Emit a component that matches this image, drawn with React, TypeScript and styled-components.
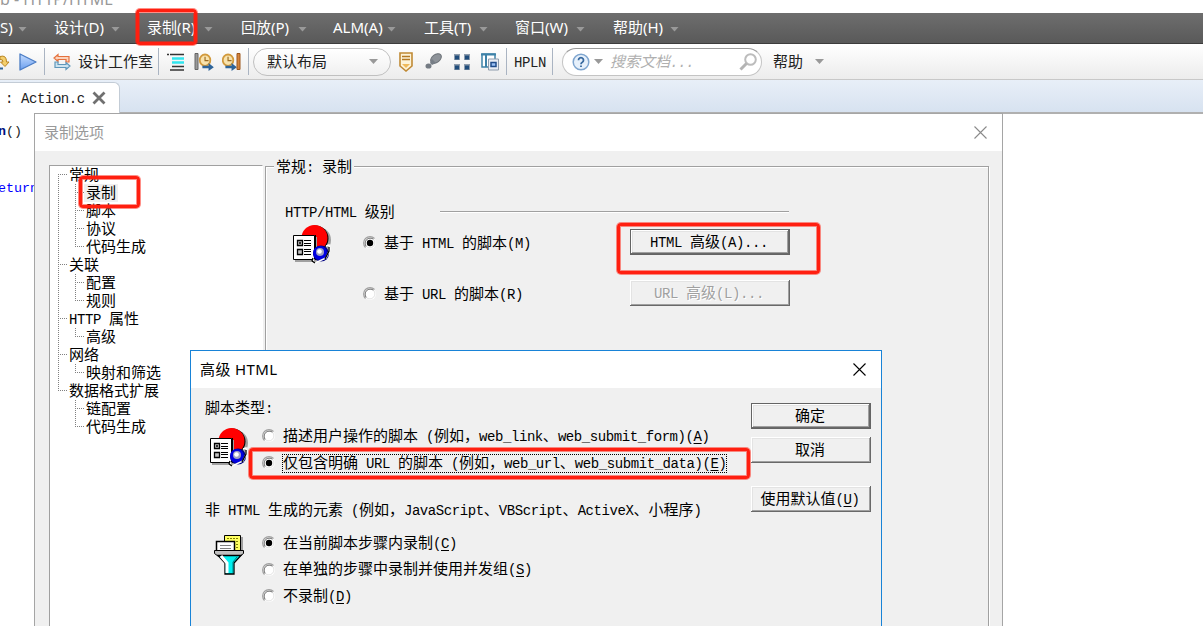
import React from 'react'
import styled, { createGlobalStyle, css } from 'styled-components';

const TREE = [
  { label: '常规', children: ['录制', '脚本', '协议', '代码生成'] },
  { label: '关联', children: ['配置', '规则'] },
  { label: 'HTTP 属性', children: ['高级'] },
  { label: '网络', children: ['映射和筛选'] },
  { label: '数据格式扩展', children: ['链配置', '代码生成'] },
];

const MENUS = [
  { label: 'S)', width: 27, gap: 27 },
  { label: '设计(D)', width: 66, gap: 27 },
  { label: '录制(R)', width: 66, gap: 28 },
  { label: '回放(P)', width: 66, gap: 26 },
  { label: 'ALM(A)', width: 63, gap: 28 },
  { label: '工具(T)', width: 64, gap: 27 },
  { label: '窗口(W)', width: 70, gap: 28 },
  { label: '帮助(H)', width: 66, gap: 0 },
];

// Half-width runs get the fixed 8px font, an "&" marks the accelerator key
function Label({ children }: { children: string }) {
  const runs = children.match(/[\x20-\x7e]+|[^\x20-\x7e]+/g) || [];
  return (
    <Text>
      {runs.map((run, i) => {
        if (!/^[\x20-\x7e]/.test(run)) return run;
        const at = run.indexOf('&');
        return (
          <Latin key={i}>
            {at < 0 ? run : <>{run.slice(0, at)}<u>{run[at + 1]}</u>{run.slice(at + 2)}</>}
          </Latin>
        );
      })}
    </Text>
  );
}

function Radio({ label, checked, focused }: { label: string; checked?: boolean; focused?: boolean }) {
  return (
    <RadioRow>
      <svg width="14" height="14" viewBox="0 0 14 14">
        <circle cx="7" cy="7" r="6" fill="#fff" />
        <path d="M2.5 11.5A6.2 6.2 0 0 1 11.5 2.5" fill="none" stroke="#a0a0a0" strokeWidth="1.2" />
        <path d="M3.4 10.6A5.1 5.1 0 0 1 10.6 3.4" fill="none" stroke="#696969" strokeWidth="1" />
        <path d="M3.4 10.6A5.1 5.1 0 0 0 10.6 3.4" fill="none" stroke="#e3e3e3" strokeWidth="1" />
        {checked && <circle cx="7" cy="7" r="3.2" fill="#000" />}
      </svg>
      <RadioLabel $focused={focused}><Label>{label}</Label></RadioLabel>
    </RadioRow>
  );
}

function CloseIcon({ color }: { color: string }) {
  return (
    <svg width="13" height="13" viewBox="0 0 13 13">
      <path d="M.5.5l12 12M12.5.5l-12 12" stroke={color} strokeWidth="1.1" fill="none" />
    </svg>
  );
}

function RecordIcon() {
  return (
    <svg width="39" height="39" viewBox="0 0 39 39">
      <circle cx="25" cy="15" r="13" fill="#a0a0a0" />
      <circle cx="22.500" cy="13.500" r="13" fill="#000" />
      <circle cx="21.500" cy="13" r="13" fill="#f00" />
      <path d="M2 12h22v25H2z" fill="#a0a0a0" />
      <path d="M.5 10.500h21v24H.5z" fill="#fff" stroke="#000" />
      <path d="M22.500 10v25" stroke="#000" />
      <path d="M4.500 15.500h5v5h-5zM4.500 24.500h5v5h-5z" fill="#c0c0c0" stroke="#000" strokeWidth="1.300" />
      <path d="M6 18h2M7 17v2" stroke="#000" />
      <path d="M11 15.500h7M11 18.500h7M11 20.500h7M11 24.500h7M11 26.500h7M11 29.500h7" stroke="#000" />
      <circle cx="28" cy="28.500" r="8" fill="#000080" />
      <circle cx="27" cy="28" r="7" fill="#0000e0" />
      <path d="M21 34l-2 3 3 1 11-5 4-9-1-4-3 1" fill="none" stroke="#fff" strokeWidth="1.500" />
      <path d="M20 33l-1 3 3 2M32 34l4-8v-4" fill="none" stroke="#000" strokeWidth="1.300" />
      <circle cx="27" cy="27" r="4" fill="#a0a0c0" />
      <circle cx="26.500" cy="26.500" r="2.300" fill="#fff" />
    </svg>
  );
}

function FilterIcon() {
  return (
    <svg width="31" height="40" viewBox="0 0 31 40">
      <path d="M12 2h17v15H12z" fill="#a0a0a0" />
      <path d="M10.500.5h16v16h-16z" fill="#ffff60" stroke="#000" />
      <path d="M13 3.500h11M13 6.500h11M22 9.500h3M22 12.500h3" stroke="#808000" strokeDasharray="2 1" />
      <path d="M2.500 6.500h18v10h-18z" fill="#fff" stroke="#000" strokeWidth="1.500" />
      <path d="M6 10.500h11M6 13.500h11" stroke="#808080" />
      <path d="M.5 15.500h29v3l-4 3h-21l-4-3z" fill="#c0c0c0" stroke="#000" />
      <path d="M4 20.500h23l-7 7.500v11h-9V28z" fill="#00f0f0" stroke="#000" strokeWidth="1.300" />
      <path d="M7 21l6 7v10" fill="none" stroke="#fff" strokeWidth="3" />
      <path d="M23 22l-4 5v11" fill="none" stroke="#008080" />
    </svg>
  );
}

const clock = (
  <>
    <circle cx="8" cy="7.500" r="6" fill="#f8e3ad" stroke="#d29a3c" strokeWidth="2" />
    <path d="M8 4v4h4" fill="none" stroke="#9a6b22" strokeWidth="1.300" />
    <path d="M5 13.500h7v-3l6 4.500-6 4v-3H5z" fill="#2e6499" />
  </>
);

function App() {
  return (
    <Screen>
      <GlobalStyle />
      <Caption>b - HTTP/HTML</Caption>
      <MenuBar>
        {MENUS.map((menu) => (
          <MenuItem key={menu.label} $width={menu.width} $gap={menu.gap}>
            {menu.label}
            <Arrow $color="#999" />
          </MenuItem>
        ))}
      </MenuBar>

      <ToolBar>
        <Slot $width={10}>
          <svg width="10" height="18" viewBox="0 0 10 18">
            <path d="M0 3.500q6.500-2 6.500 5.500H9l-4 4.500L.5 9H3q0-3-3-2.500z" fill="#f4cf6d" stroke="#b98624" />
            <path d="M0 15.500h3" stroke="#2e6499" strokeWidth="2" />
          </svg>
        </Slot>
        <Slot $width={18} $gap={9}>
          <svg width="18" height="18" viewBox="0 0 18 18">
            <defs>
              <linearGradient id="play" x2="0" y2="1">
                <stop stopColor="#c6ddff" />
                <stop offset="1" stopColor="#6a9eee" />
              </linearGradient>
            </defs>
            <path d="M1 1l16 8L1 17z" fill="url(#play)" stroke="#4a7cc4" strokeWidth="1.300" strokeLinejoin="round" />
          </svg>
        </Slot>
        <Separator $gap={7} />
        <Slot $width={18} $gap={8}>
          <svg width="18" height="18" viewBox="0 0 18 18">
            <path d="M5 1.500v2h11v5.500h-3V6.500H5v2L1 5z" fill="#fbd3bd" stroke="#e5713c" strokeWidth="1.200" />
            <path d="M13 16.500v-2H2V9h3v2.500h8v-2l4 3.500z" fill="#cde3ef" stroke="#5f97ba" strokeWidth="1.200" />
          </svg>
        </Slot>
        <Slot $width={75} $gap={7}><Label>设计工作室</Label></Slot>
        <Separator $gap={5} />
        <Slot $width={18} $gap={8}>
          <svg width="18" height="18" viewBox="0 0 18 18">
            <path d="M0 1.500h2M3 1.500h14M5 13.500h12M3 17h14" stroke="#333" strokeWidth="1.300" />
            <path d="M5 5.500h12M5 9.500h12" stroke="#30e5ee" strokeWidth="2.400" />
          </svg>
        </Slot>
        <Slot $width={20} $gap={9}>
          <svg width="20" height="20" viewBox="0 0 20 20">
            <path d="M1 1.500h3v16H1z" fill="#999" stroke="#666" />
            <g transform="translate(4 1) scale(.88 .95)">{clock}</g>
          </svg>
        </Slot>
        <Slot $width={19} $gap={8}>
          <svg width="19" height="20" viewBox="0 0 19 20">
            <g transform="translate(-1 1) scale(.88 .95)">{clock}</g>
            <path d="M15 1.500h3v16h-3z" fill="#d6843b" stroke="#9c561c" />
          </svg>
        </Slot>
        <Separator $gap={7} />
        <Combo>
          <Label>默认布局</Label>
          <Arrow $color="#999" />
        </Combo>
        <Slot $width={14} $gap={8}>
          <svg width="14" height="20" viewBox="0 0 14 20">
            <path d="M1 1h12v13l-6 5-6-5z" fill="#fdf3d8" stroke="#c08a35" strokeWidth="1.600" />
            <path d="M3 4.500h8M3 7.500h8" stroke="#b37a24" strokeWidth="1.300" />
            <path d="M3 12h8l-4 4z" fill="#efb95a" />
          </svg>
        </Slot>
        <Slot $width={17} $gap={12}>
          <svg width="17" height="17" viewBox="0 0 17 17">
            <ellipse cx="11" cy="5.500" rx="6" ry="3.900" transform="rotate(-38 11 5.500)" fill="#8e9399" stroke="#6b7177" />
            <path d="M7 6l4 4-4 2-2-2z" fill="#777e86" />
            <ellipse cx="3.500" cy="13" rx="3" ry="2.600" fill="#747b83" />
          </svg>
        </Slot>
        <Slot $width={16} $gap={12}>
          <svg width="16" height="16" viewBox="0 0 16 16">
            <path d="M0 0h6v6H0zM10 0h6v6h-6zM0 10h6v6H0zM10 10h6v6h-6z" fill="#8e9cac" />
            <path d="M1 1.500h4v4H1zM11 1.500h4v4h-4zM1 11.500h4v4H1zM11 11.500h4v4h-4z" fill="#1f4c7b" />
          </svg>
        </Slot>
        <Slot $width={18} $gap={11}>
          <svg width="18" height="18" viewBox="0 0 18 18">
            <path d="M1 1h13v13H1z" fill="#fff" stroke="#3e82a8" strokeWidth="1.500" />
            <path d="M0 1.500h15M5 2v12" stroke="#3e82a8" strokeWidth="2" />
            <path d="M7.500 6h10v11h-10z" fill="#e8edf4" stroke="#8e9cac" />
            <path d="M10 9.500h5v4h-5z" fill="#9ac0f4" stroke="#1f4c8b" strokeWidth="1.500" />
          </svg>
        </Slot>
        <Separator $gap={7} />
        <Slot $width={32} $gap={7}><Label>HPLN</Label></Slot>
        <Separator $gap={6} />
        <SearchBox>
          <svg width="18" height="18" viewBox="0 0 18 18">
            <circle cx="9" cy="9" r="7.800" fill="#e6f0fb" stroke="#7ea5cf" strokeWidth="1.500" />
            <path d="M6.500 7.200a2.500 2.500 0 1 1 3.800 2.100Q9 10 9 11.200M9 12.500v1.600" fill="none" stroke="#37699f" strokeWidth="1.800" />
          </svg>
          <Arrow $color="#999" />
          <Hint><Label>搜索文档...</Label></Hint>
          <svg width="18" height="18" viewBox="0 0 18 18">
            <circle cx="11.500" cy="6.500" r="5.300" fill="none" stroke="#bcbcbc" strokeWidth="2" />
            <path d="M7.500 10.500L1.500 16.500" stroke="#b4b4b4" strokeWidth="3" />
          </svg>
        </SearchBox>
        <Slot $width={30} $gap={11}><Label>帮助</Label></Slot>
        <Slot $width={9} $gap={12}><Arrow $color="#999" /></Slot>
      </ToolBar>

      <TabStrip>
        <Tab>
          <Label>: Action.c</Label>
          <svg width="14" height="14" viewBox="0 0 14 14">
            <path d="M1.500 1.500l11 11M12.500 1.500l-11 11" stroke="#707070" strokeWidth="2.800" />
          </svg>
        </Tab>
      </TabStrip>
      <Editor>
        <CodeLine><b>n</b>()</CodeLine>
        <CodeLine $keyword>eturn</CodeLine>
      </Editor>

      <OptionsDialog>
        <TitleBar $muted>
          录制选项
          <CloseIcon color="#8a8a8a" />
        </TitleBar>
        <OptionsBody>
          <Tree>
            {TREE.map((node, n) => {
              const last = n === TREE.length - 1;
              return (
                <React.Fragment key={node.label}>
                  <TreeRow>
                    <Branch $width={11} $from={n === 0 ? 8 : 0} $to={last ? 9 : 18} $tick />
                    <Label>{node.label}</Label>
                  </TreeRow>
                  {node.children.map((child, i) => (
                    <TreeRow key={child}>
                      <Branch $width={17} $from={0} $to={last ? 0 : 18} />
                      <Branch $width={9} $from={0} $to={i === node.children.length - 1 ? 9 : 18} $tick />
                      <Leaf $selected={n === 0 && i === 0}><Label>{child}</Label></Leaf>
                    </TreeRow>
                  ))}
                </React.Fragment>
              );
            })}
          </Tree>
          <Group>
            <Legend><Label>常规: 录制</Label></Legend>
            <Section>
              <Label>HTTP/HTML 级别</Label>
              <Rule />
            </Section>
            <Level>
              <RecordIcon />
              <LevelRadios>
                <Radio label="基于 HTML 的脚本(M)" checked />
                <Radio label="基于 URL 的脚本(R)" />
              </LevelRadios>
              <LevelButtons>
                <Button $primary><Label>HTML 高级(A)...</Label></Button>
                <Button disabled><Label>URL 高级(L)...</Label></Button>
              </LevelButtons>
            </Level>
          </Group>
        </OptionsBody>
      </OptionsDialog>

      <AdvancedDialog>
        <TitleBar>
          高级 HTML
          <CloseIcon color="#000" />
        </TitleBar>
        <AdvancedBody>
          <Settings>
            <Heading><Label>脚本类型:</Label></Heading>
            <Choices $left={5}>
              <RecordIcon />
              <RadioList $gap={9} $left={13} $top={-1}>
                <Radio label="描述用户操作的脚本 (例如，web_link、web_submit_form)(&A)" />
                <Radio label="仅包含明确 URL 的脚本 (例如，web_url、web_submit_data)(&E)" checked focused />
              </RadioList>
            </Choices>
            <Heading $top={29}><Label>非 HTML 生成的元素 (例如，JavaScript、VBScript、ActiveX、小程序)</Label></Heading>
            <Choices $left={9} $top={16}>
              <FilterIcon />
              <RadioList $gap={8.5} $left={17} $top={-1}>
                <Radio label="在当前脚本步骤内录制(&C)" checked />
                <Radio label="在单独的步骤中录制并使用并发组(&S)" />
                <Radio label="不录制(&D)" />
              </RadioList>
            </Choices>
          </Settings>
          <Actions>
            <Button $primary><Label>确定</Label></Button>
            <Button><Label>取消</Label></Button>
            <Button $top={15}><Label>使用默认值(&U)</Label></Button>
          </Actions>
        </AdvancedBody>
      </AdvancedDialog>

      <Marker $x={136} $y={9} $w={61} $h={36} />
      <Marker $x={79} $y={176} $w={61} $h={32} />
      <Marker $x={617} $y={223} $w={203} $h={51} />
      <Marker $x={249} $y={448} $w={501} $h={31} />
    </Screen>
  )
}

export default App

const GlobalStyle = createGlobalStyle`
  *, *::before, *::after {
    box-sizing: border-box;
  }
  body {
    margin: 0;
    overflow: hidden;
  }
  svg {
    display: block;
    flex: none;
  }
`;

const uiFont = css`
  font: 15px/18px "Noto Sans", "Noto Sans CJK SC", sans-serif;
`;

const Screen = styled.div`
  position: relative;
  width: 1203px;
  height: 626px;
  overflow: hidden;
  background: #fff;
  color: #000;
  white-space: pre;
`;

const Text = styled.span`
  margin: -1px 0 1px;
  font: 15px/18px "Noto Sans CJK SC", sans-serif;
`;

const Latin = styled.span`
  font-family: "Liberation Mono", monospace;
  font-size: 14px;
  letter-spacing: -0.42px;
  line-height: 1;

  u {
    text-underline-offset: 2px;
  }
`;

const Arrow = styled.i<{ $color: string }>`
  flex: none;
  width: 9px;
  height: 5px;
  background: ${(p) => p.$color};
  clip-path: polygon(0 0, 100% 0, 50% 100%);
`;

const Caption = styled.div`
  ${uiFont}
  display: flex;
  align-items: flex-end;
  height: 13px;
  padding-bottom: 5px;
  color: #999;
  font-size: 16px;
`;

const MenuBar = styled.div`
  display: flex;
  align-items: center;
  height: 31px;
  padding-bottom: 2px;
  background: linear-gradient(#6e6e6e, #595959);
  border-bottom: 1px solid #3c3c3c;
`;

const MenuItem = styled.div<{ $width: number; $gap: number }>`
  ${uiFont}
  display: flex;
  align-items: center;
  justify-content: space-between;
  width: ${(p) => p.$width}px;
  margin-right: ${(p) => p.$gap}px;
  color: #fff;

  ${Arrow} {
    margin-top: 4px;
  }
`;

const ToolBar = styled.div`
  display: flex;
  align-items: center;
  height: 36px;
  background: linear-gradient(#fff, #ececec);
  border-bottom: 1px solid #c8c8c8;
  color: #222;
`;

const Slot = styled.div<{ $width: number; $gap?: number }>`
  display: flex;
  flex: none;
  width: ${(p) => p.$width}px;
  margin-left: ${(p) => p.$gap || 0}px;
`;

const Separator = styled.div<{ $gap: number }>`
  width: 1px;
  height: 27px;
  margin-left: ${(p) => p.$gap}px;
  background: #aab4c2;
`;

const Combo = styled.div`
  display: flex;
  align-items: center;
  justify-content: space-between;
  width: 138px;
  height: 28px;
  margin-left: 4px;
  padding: 0 12px 0 13px;
  border: 1px solid #c0c0c0;
  border-radius: 14px;
  background: linear-gradient(#fff, #f0f0f0);
`;

const SearchBox = styled.div`
  display: flex;
  align-items: center;
  width: 200px;
  height: 28px;
  margin-left: 9px;
  padding: 0 4px 0 9px;
  border: 1px solid #c4c4c4;
  border-top-color: #999;
  border-radius: 14px;
  background: #fff;

  ${Arrow} {
    margin-left: 4px;
  }
`;

const Hint = styled.div`
  display: flex;
  flex: 1;
  margin-left: 7px;
  color: #b0b0b0;

  ${Text} {
    font-style: italic;
  }
`;

const TabStrip = styled.div`
  display: flex;
  align-items: flex-end;
  height: 34px;
  background: linear-gradient(#e8eff8, #d7e2f0);
  border-bottom: 2px solid #b0b0b0;
`;

const Tab = styled.div`
  display: flex;
  align-items: center;
  gap: 7px;
  width: 120px;
  height: 32px;
  margin-bottom: -2px;
  padding: 0 0 1px 5px;
  border: 1px solid #c3ccd6;
  border-width: 1px 1px 0 0;
  border-top-right-radius: 6px;
  background: #fff;
  color: #222;
`;

const Editor = styled.div`
  padding-top: 8px;
`;

const CodeLine = styled.div<{ $keyword?: boolean }>`
  height: 57px;
  margin-left: -2px;
  font: 13.33px/19px "Liberation Mono", monospace;
  color: ${(p) => (p.$keyword ? '#00f' : '#222')};

  b {
    color: #001080;
  }
`;

const Dialog = styled.div`
  position: absolute;
  background: #f0f0f0;
`;

const OptionsDialog = styled(Dialog)`
  left: 34px;
  top: 113px;
  width: 969px;
  height: 560px;
  border: 1px solid #a5a5a5;
`;

const AdvancedDialog = styled(Dialog)`
  left: 190px;
  top: 350px;
  width: 692px;
  height: 320px;
  border: 1px solid #1883d7;
`;

const TitleBar = styled.div<{ $muted?: boolean }>`
  ${uiFont}
  display: flex;
  align-items: center;
  justify-content: space-between;
  height: 37px;
  padding: 0 15px 1px 9px;
  background: #fff;
  color: ${(p) => (p.$muted ? '#999' : '#000')};
  letter-spacing: ${(p) => (p.$muted ? 0 : 0.4)}px;
`;

const OptionsBody = styled.div`
  display: flex;
  height: 520px;
  padding: 14px 13px 0 14px;
`;

const Tree = styled.div`
  width: 214px;
  margin-right: 2px;
  padding-left: 8px;
  border: 1px solid #a0a0a0;
  border-right-color: #fff;
  background: #fff;
`;

const TreeRow = styled.div`
  display: flex;
  height: 18px;
`;

const Branch = styled.div<{ $width: number; $from: number; $to: number; $tick?: boolean }>`
  flex: none;
  width: ${(p) => p.$width}px;
  background:
    repeating-linear-gradient(#808080 0 1px, transparent 1px 2px) 0 ${(p) => p.$from}px / 1px ${(p) => p.$to - p.$from}px no-repeat,
    repeating-linear-gradient(90deg, #808080 0 1px, transparent 1px 2px) 0 8px / ${(p) => (p.$tick ? 9 : 0)}px 1px no-repeat;
`;

const Leaf = styled.div<{ $selected?: boolean }>`
  display: flex;
  padding: 0 2px;
  background: ${(p) => (p.$selected ? '#f0f0f0' : 'transparent')};
`;

const Group = styled.div`
  flex: 1;
  margin-top: 1px;
  border: 1px solid #a0a0a0;
  box-shadow: 1px 1px #fff, inset 1px 1px #fff;
`;

const Legend = styled.div`
  display: flex;
  width: 80px;
  height: 18px;
  margin: -9px 0 0 8px;
  padding-left: 2px;
  background: #f0f0f0;
`;

const Section = styled.div`
  display: flex;
  align-items: center;
  justify-content: space-between;
  width: 504px;
  height: 18px;
  margin: 27px 0 0 19px;
`;

const Rule = styled.div`
  width: 349px;
  height: 2px;
  border-top: 1px solid #a0a0a0;
  background: #fff;
`;

const Level = styled.div`
  display: flex;
  align-items: flex-start;
  margin: 4px 0 0 27px;
`;

const RadioRow = styled.div`
  display: flex;
  align-items: center;
  height: 18px;
`;

const RadioLabel = styled.div<{ $focused?: boolean }>`
  display: flex;
  height: 19px;
  margin-left: 6px;
  border: 1px dotted ${(p) => (p.$focused ? '#000' : 'transparent')};

  ${Text} {
    margin-top: -2px;
  }
`;

const RadioList = styled.div<{ $gap: number; $left: number; $top: number }>`
  display: flex;
  flex-direction: column;
  align-items: flex-start;
  gap: ${(p) => p.$gap}px;
  margin: ${(p) => p.$top}px 0 0 ${(p) => p.$left}px;
`;

const LevelRadios = styled.div`
  display: flex;
  flex-direction: column;
  gap: 33px;
  width: 267px;
  margin: 9px 0 0 31px;
`;

const LevelButtons = styled.div`
  display: flex;
  flex-direction: column;
  gap: 25px;
  width: 160px;
  margin-top: 4px;
`;

const Button = styled.button<{ $primary?: boolean; $top?: number }>`
  display: flex;
  align-items: center;
  justify-content: center;
  height: 26px;
  margin: ${(p) => p.$top || 0}px 0 0;
  padding: 0 2px 0 0;
  border: 0 solid #646464;
  background: #f0f0f0;
  color: #000;
  white-space: pre;
  box-shadow: inset -1px -1px #696969, inset 1px 1px #fff, inset -2px -2px #a0a0a0, inset 2px 2px #e3e3e3;

  ${(p) => p.$primary && css`
    border-width: 1px;
  `}

  &:disabled {
    color: #a0a0a0;
    text-shadow: 1px 1px #fff;
  }
`;

const AdvancedBody = styled.div`
  display: flex;
  justify-content: space-between;
  padding: 11px 10px 0 14px;
`;

const Settings = styled.div`
  display: flex;
  flex-direction: column;
`;

const Heading = styled.div<{ $top?: number }>`
  display: flex;
  height: 18px;
  margin-top: ${(p) => p.$top || 0}px;
`;

const Choices = styled.div<{ $left: number; $top?: number }>`
  display: flex;
  align-items: flex-start;
  margin: ${(p) => p.$top || 11}px 0 0 ${(p) => p.$left}px;
`;

const Actions = styled.div`
  display: flex;
  flex-direction: column;
  gap: 8px;
  width: 120px;
  margin-top: 4px;
`;

// Hand-drawn style callout frame around a control
const Marker = styled.div<{ $x: number; $y: number; $w: number; $h: number }>`
  position: absolute;
  left: ${(p) => p.$x}px;
  top: ${(p) => p.$y}px;
  width: ${(p) => p.$w}px;
  height: ${(p) => p.$h}px;
  border: 3px solid #ff1f10;
  border-radius: 4px;
  box-shadow: 0 0 0 1px rgba(255, 31, 16, 0.5), inset 0 0 0 1px rgba(255, 31, 16, 0.5);
`;
